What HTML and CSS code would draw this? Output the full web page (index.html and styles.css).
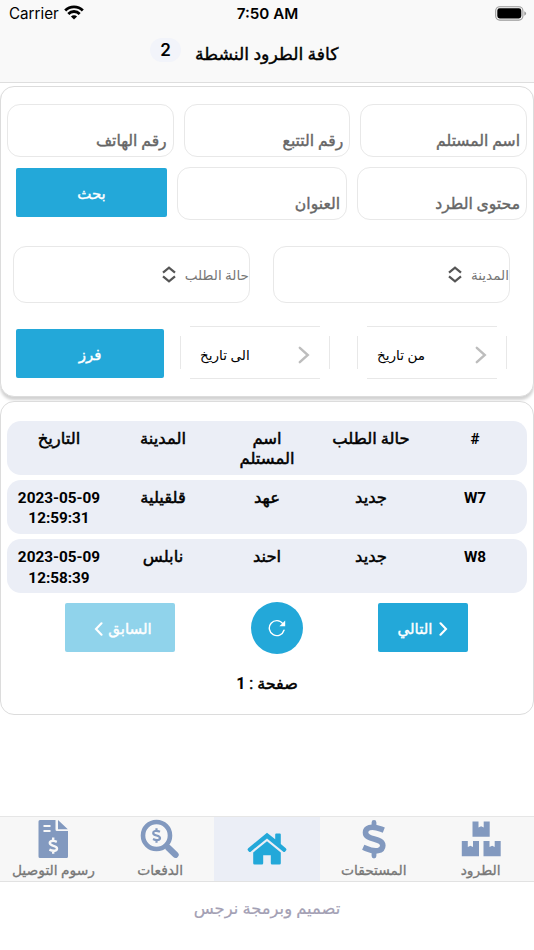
FILE: index.html
```
<!DOCTYPE html>
<html lang="ar" dir="rtl">
<head>
    <meta charset="UTF-8">
    <meta name="viewport" content="width=device-width, initial-scale=1.0">
    <title>كافة الطرود النشطة</title>
    <link rel="stylesheet" href="styles.css">
</head>
<body>
    <header class="header">
        <div class="status-bar" dir="ltr">
            <div class="carrier">
                <span>Carrier</span>
                <svg width="20" height="15" viewBox="0 0 20 15" fill="none" stroke="#000" stroke-width="2.8">
                    <path d="M1.2 5.6a12.4 12.4 0 0 1 17.6 0"/>
                    <path d="M4.3 8.9a8 8 0 0 1 11.4 0"/>
                    <path d="M10 14.6 6.9 11.5a4.4 4.4 0 0 1 6.2 0z" fill="#000" stroke="none"/>
                </svg>
            </div>
            <div class="clock">7:50 AM</div>
            <div class="battery">
                <svg width="32" height="15" viewBox="0 0 32 15">
                    <rect x=".7" y=".7" width="27.2" height="13.4" rx="4" fill="none" stroke="#999" stroke-width="1.1"/>
                    <rect x="2.3" y="2.3" width="24" height="10.2" rx="2.4"/>
                    <path d="M29.3 5.2q1.8.8 1.8 2.3t-1.8 2.3z" fill="#999"/>
                </svg>
            </div>
        </div>
        <div class="title-bar">
            <h1 class="title">كافة الطرود النشطة</h1>
            <span class="badge">2</span>
        </div>
    </header>

    <main class="content">
        <section class="card filters">
            <div class="row">
                <div class="field">اسم المستلم</div>
                <div class="field">رقم التتبع</div>
                <div class="field">رقم الهاتف</div>
            </div>
            <div class="row">
                <div class="field">محتوى الطرد</div>
                <div class="field">العنوان</div>
                <button class="btn btn-search">بحث</button>
            </div>
            <div class="row selects">
                <div class="select">
                    <span>المدينة</span>
                    <svg width="14" height="17" viewBox="0 0 14 17" fill="none" stroke="#555" stroke-width="2.2"><path d="M1 6.6 7 1.6l6 5M1 10.4l6 5 6-5"/></svg>
                </div>
                <div class="select">
                    <span>حالة الطلب</span>
                    <svg width="14" height="17" viewBox="0 0 14 17" fill="none" stroke="#555" stroke-width="2.2"><path d="M1 6.6 7 1.6l6 5M1 10.4l6 5 6-5"/></svg>
                </div>
            </div>
            <div class="row dates">
                <div class="date">
                    <svg width="12" height="18" viewBox="0 0 12 18" fill="none" stroke="#bdbdbd" stroke-width="2.4" stroke-linecap="round"><path d="m1.8 1.8 8 7.2-8 7.2"/></svg>
                    <span>من تاريخ</span>
                </div>
                <div class="date">
                    <svg width="12" height="18" viewBox="0 0 12 18" fill="none" stroke="#bdbdbd" stroke-width="2.4" stroke-linecap="round"><path d="m1.8 1.8 8 7.2-8 7.2"/></svg>
                    <span>الى تاريخ</span>
                </div>
                <button class="btn btn-sort">فرز</button>
            </div>
        </section>

        <section class="card results">
            <div class="line line-head">
                <div class="latin">#</div>
                <div>حالة الطلب</div>
                <div>اسم المستلم</div>
                <div>المدينة</div>
                <div>التاريخ</div>
            </div>
            <div class="line">
                <div class="latin">W7</div>
                <div>جديد</div>
                <div>عهد</div>
                <div>قلقيلية</div>
                <div class="latin" dir="ltr">2023-05-09 12:59:31</div>
            </div>
            <div class="line">
                <div class="latin">W8</div>
                <div>جديد</div>
                <div>احند</div>
                <div>نابلس</div>
                <div class="latin" dir="ltr">2023-05-09 12:58:39</div>
            </div>
            <div class="pager">
                <button class="btn btn-next">
                    <svg width="9" height="14" viewBox="0 0 9 14" fill="none" stroke="#fff" stroke-width="2.1" stroke-linecap="round"><path d="m1.5 1.3 5.5 5.7-5.5 5.7"/></svg>
                    <span>التالي</span>
                </button>
                <button class="btn btn-refresh">
                    <svg width="18" height="18" viewBox="0 0 18 18" fill="none" stroke="#fff" stroke-width="1.4"><path d="M16 11.2A7.5 7.5 0 1 1 14.8 4.6" stroke-linecap="round"/><path d="M17.2 1.6v5.6h-5.8z" fill="#fff" stroke="none"/></svg>
                </button>
                <button class="btn btn-prev">
                    <span>السابق</span>
                    <svg width="9" height="14" viewBox="0 0 9 14" fill="none" stroke="#fff" stroke-width="2.1" stroke-linecap="round"><path d="M7.5 1.3 2 7l5.5 5.7"/></svg>
                </button>
            </div>
            <div class="page">صفحة : <b>1</b></div>
        </section>
    </main>

    <nav class="tabs">
        <a class="tab">
            <svg width="40" height="40" viewBox="0 0 40 40">
                <path d="M11.5 2.5h6v6l2.600-1.300 2.600 1.300v-6h6v15.300H11.500zM.8 22h6v6l2.600-1.300 2.600 1.300v-6h6v15.200H.8zM22.500 22h6v6l2.600-1.300 2.600 1.300v-6h6v15.200H22.500z"/>
            </svg>
            <span>الطرود</span>
        </a>
        <a class="tab">
            <svg width="40" height="40" viewBox="0 0 40 40" fill="none">
                <path d="M20 3.5v4M20 33v4" stroke-width="4.8" stroke-linecap="round" class="stroke"/>
                <path d="M27.200 10.200C16.500 6 11.500 9 11.500 13.500c0 8.500 17.300 4.500 17.300 13 0 5.500-7 7.200-17 2.900" stroke-width="5.600" stroke-linecap="square" class="stroke"/>
            </svg>
            <span>المستحقات</span>
        </a>
        <a class="tab active">
            <svg width="40" height="34" viewBox="0 0 40 34">
                <path d="M20 .8 1.200 16.200q-1.200 1.200-.2 2.300l.8.900q1 1 2.200 0L20 6.400l16 13q1.200 1 2.200 0l.8-.9q1-1.100-.2-2.300l-5-4.200V2.500q0-1-1-1h-3.600q-1 0-1 1v4.800z"/>
                <path d="M20 9.200 6.200 20.500v10.700q0 1.300 1.300 1.300H15q1.200 0 1.200-1.200v-8h7.600v8q0 1.200 1.200 1.200h7.500q1.300 0 1.300-1.300V20.500z"/>
            </svg>
        </a>
        <a class="tab">
            <svg width="40" height="40" viewBox="0 0 40 40" fill="none">
                <circle cx="16.5" cy="16.5" r="13.5" stroke-width="4.6" class="stroke"/>
                <path d="m28.5 29 7 6.7" stroke-width="6.4" stroke-linecap="round" class="stroke"/>
                <path d="M16.5 9.2v2.500M16.500 21.200v2.500M20 12.800c-4-1.800-6.800-.7-6.800 1.200 0 3.300 6.800 1.700 6.800 5 0 2-3 3-7 1" stroke-width="2.200" class="stroke"/>
            </svg>
            <span>الدفعات</span>
        </a>
        <a class="tab">
            <svg width="30" height="40" viewBox="0 0 30 40">
                <path d="M2 1h15.500v9.500q0 1.500 1.500 1.500h11v25.500q0 1.500-1.500 1.500H2q-1.500 0-1.500-1.500v-35Q.5 1 2 1zM20 1l9.800 9.300H20z"/>
                <path d="M5.500 7h7M5.500 12h7" stroke="#f7f7f7" stroke-width="1.8"/>
                <path d="M15.200 18.500v3M15.200 31.500v3.200M18.800 22.800c-4-1.800-7-.8-7 1.300 0 3.600 7.200 1.900 7.200 5.400 0 2.400-3.300 3.100-7.600 1.200" fill="none" stroke="#f7f7f7" stroke-width="2.4"/>
            </svg>
            <span>رسوم التوصيل</span>
        </a>
    </nav>
    <footer class="footer">تصميم وبرمجة نرجس</footer>
</body>
</html>
```
FILE: styles.css
```
* {
    box-sizing: border-box;
}

body {
    margin: 0;
    height: 950px;
    display: flex;
    flex-direction: column;
    background-color: #fff;
    color: #000;
    font-family: Roboto, "DejaVu Sans", sans-serif;
    overflow: hidden;
}

.header {
    height: 83px;
    background-color: #f9f9f9;
    border-bottom: 1px solid #dedede;
}

.status-bar {
    display: grid;
    grid-template-columns: 1fr auto 1fr;
    align-items: center;
    height: 27px;
    padding: 0 7px 0 9px;
    font: 15.2px Inter, sans-serif;
}

.carrier {
    display: flex;
    align-items: center;
    gap: 5px;
}

.carrier svg {
    margin-top: -2px;
}

.clock {
    padding-right: 1px;
    font-weight: 600;
}

.battery {
    display: flex;
    justify-content: flex-end;
}

.title-bar {
    display: flex;
    justify-content: flex-end;
    gap: 14px;
    padding: 11px 0 0 150px;
}

.title {
    margin: 4px 0 0;
    font-size: 17.3px;
    line-height: 24px;
    font-weight: normal;
    -webkit-text-stroke: 0.4px;
}

.badge {
    width: 31px;
    height: 24px;
    border-radius: 12px;
    background-color: #f2f4fa;
    font: 600 17px/24px Inter, sans-serif;
    text-align: center;
}

.content {
    flex: 1;
    padding-top: 3px;
}

.card {
    border: 1px solid #dcdcdc;
    border-radius: 14px;
    background-color: #fff;
}

.filters {
    height: 311px;
    padding: 17px 6px 0;
    box-shadow: 0 3px 3px rgba(0, 0, 0, 0.18);
}

.row {
    display: flex;
    gap: 10px;
    margin-bottom: 10px;
}

.field {
    flex: 1;
    height: 53px;
    padding: 24px 6px 0;
    border: 1px solid #e8e8e8;
    border-radius: 13px;
    color: #666;
    font-size: 15.6px;
    line-height: 24px;
    white-space: nowrap;
    -webkit-text-stroke: 0.4px;
}

.btn {
    display: flex;
    align-items: center;
    justify-content: center;
    height: 49px;
    padding: 3px 0 0;
    border: none;
    border-radius: 2px;
    background-color: #23a8d9;
    color: #fff;
    font: 15px/20px Roboto, "DejaVu Sans", sans-serif;
    -webkit-text-stroke: 0.4px;
}

.btn-search {
    width: 151px;
    margin: 1px 0 0 9px;
}

.selects {
    gap: 23px;
    padding: 16px 17px 0 6px;
}

.select {
    flex: 1;
    display: flex;
    align-items: center;
    gap: 9px;
    height: 57px;
    border: 1px solid #e8e8e8;
    border-radius: 13px;
    color: #777;
    font-size: 13.6px;
}

.dates {
    gap: 27px;
    padding: 13px 20px 0 9px;
}

.date {
    flex: 1;
    display: flex;
    align-items: center;
    justify-content: space-between;
    height: 53px;
    padding: 4px 20px 0;
    font-size: 13.6px;
    background:
        linear-gradient(#e8e8e8, #e8e8e8) center top / 130px 1px no-repeat,
        linear-gradient(#e8e8e8, #e8e8e8) center bottom / 130px 1px no-repeat,
        linear-gradient(#e8e8e8, #e8e8e8) left center / 1px 33px no-repeat,
        linear-gradient(#e8e8e8, #e8e8e8) right center / 1px 33px no-repeat;
}

.btn-sort {
    width: 148px;
    margin: 3px -11px 0 0;
}

.results {
    height: 314px;
    margin-top: 4px;
    padding: 18.5px 6px 0;
}

.line {
    display: grid;
    grid-template-columns: repeat(5, 1fr);
    height: 54px;
    margin-bottom: 5.3px;
    padding-top: 8px;
    border-radius: 14px;
    background-color: #ebeef6;
    font-size: 16.4px;
    line-height: 20.5px;
    text-align: center;
    -webkit-text-stroke: 0.5px;
}

.line div {
    padding: 0 8px;
}

.line-head div {
    padding: 0 12px;
}

.line .latin {
    font-size: 15.3px;
    font-weight: bold;
    -webkit-text-stroke: 0;
}

.pager {
    display: flex;
    align-items: center;
    justify-content: space-between;
    margin: 8.5px 59px 0 58px;
}

.pager .btn {
    gap: 7px;
}

.btn-next {
    width: 90px;
}

.pager .btn-refresh {
    width: 52px;
    height: 52px;
    padding: 0;
    border-radius: 50%;
}

.pager .btn-prev {
    gap: 5px;
    width: 110px;
    padding-left: 6px;
    opacity: 0.5;
}

.page {
    margin-top: 19px;
    font-size: 16px;
    line-height: 22px;
    text-align: center;
    -webkit-text-stroke: 0.5px;
}

.page b {
    -webkit-text-stroke: 0;
}

.tabs {
    display: grid;
    grid-template-columns: repeat(5, 1fr);
    height: 66px;
    border-top: 1px solid #e6e6e6;
    border-bottom: 1px solid #e2e2e2;
    background-color: #f7f7f7;
}

.tab {
    display: flex;
    flex-direction: column;
    align-items: center;
    gap: 1px;
    padding-top: 2px;
    fill: #8299bf;
    color: #777;
    font-size: 13.8px;
    line-height: 20px;
    white-space: nowrap;
    -webkit-text-stroke: 0.3px;
}

.stroke {
    fill: none;
    stroke: #8299bf;
}

.tab.active {
    justify-content: center;
    padding: 0;
    background-color: #ebeef6;
    fill: #23a8d9;
}

.footer {
    height: 68px;
    padding-top: 15px;
    color: #a3a0b4;
    font-size: 16.4px;
    line-height: 24px;
    text-align: center;
    -webkit-text-stroke: 0.2px;
}
```
